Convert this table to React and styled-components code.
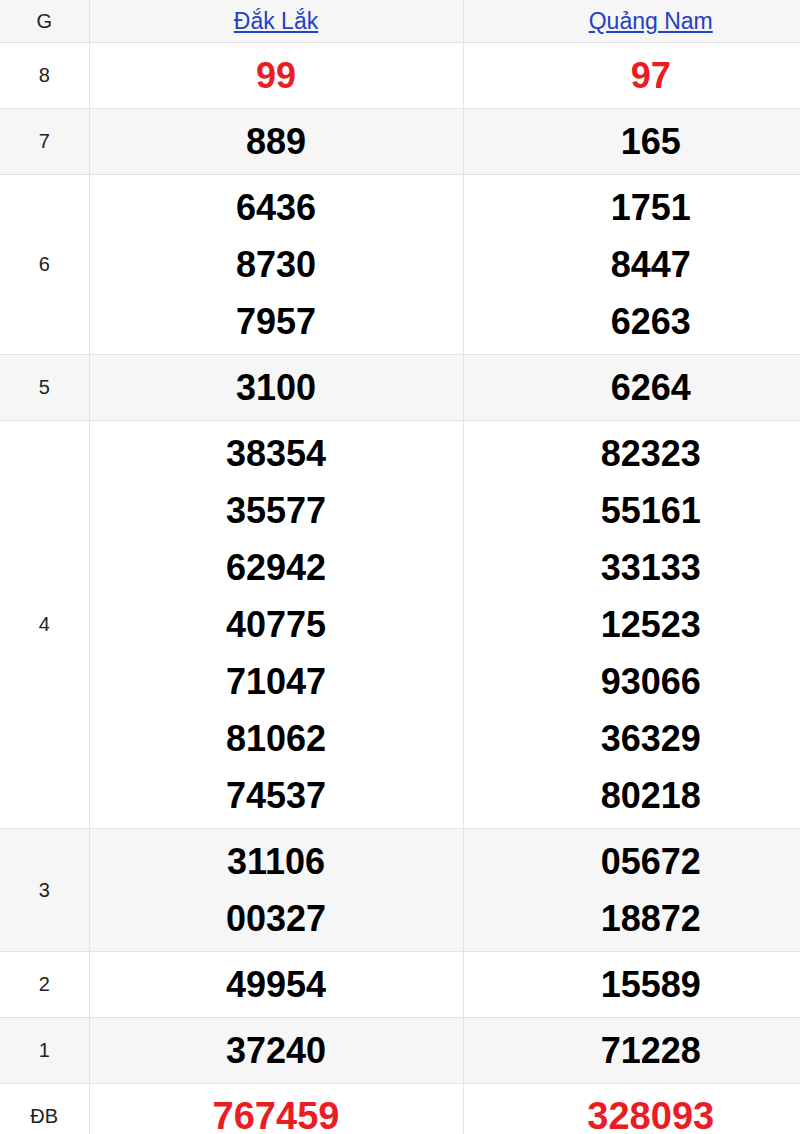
import React from 'react';
import styled, { createGlobalStyle } from 'styled-components';

const GlobalStyle = createGlobalStyle`
    body {
        margin: 0;
        background: #fff;
        overflow-x: hidden;
        font-family: "Liberation Sans", Arial, sans-serif;
    }
`;

const provinces = ['Đắk Lắk', 'Quảng Nam'];

const prizes = [
    { label: '8', red: true, values: [['99'], ['97']] },
    { label: '7', values: [['889'], ['165']] },
    { label: '6', values: [['6436', '8730', '7957'], ['1751', '8447', '6263']] },
    { label: '5', values: [['3100'], ['6264']] },
    {
        label: '4',
        values: [
            ['38354', '35577', '62942', '40775', '71047', '81062', '74537'],
            ['82323', '55161', '33133', '12523', '93066', '36329', '80218'],
        ],
    },
    { label: '3', values: [['31106', '00327'], ['05672', '18872']] },
    { label: '2', values: [['49954'], ['15589']] },
    { label: '1', values: [['37240'], ['71228']] },
    { label: 'ĐB', red: true, big: true, values: [['767459'], ['328093']] },
];

// the table is wider than the window, its right edge is cut off
const Table = styled.table`
    width: 838px;
    border-collapse: collapse;
    table-layout: fixed;
`;

const Row = styled.tr`
    background: ${p => (p.$shaded ? '#f6f6f7' : '#fff')};
`;

const HeadCell = styled.th`
    height: 42px;
    padding: 0;
    font-weight: normal;
    text-align: center;
    vertical-align: middle;
    border-right: 1px solid #e2e2e8;
    border-bottom: 1px solid #e2e2e8;
    &:last-child {
        border-right: none;
    }
`;

const GCell = styled.td`
    padding: 0;
    text-align: center;
    vertical-align: middle;
    font-size: 20px;
    color: #222;
    border-right: 1px solid #e2e2e8;
    border-bottom: 1px solid #e2e2e8;
`;

const NumCell = styled.td`
    padding: 4px 0;
    text-align: center;
    vertical-align: middle;
    border-right: 1px solid #e2e2e8;
    border-bottom: 1px solid #e2e2e8;
    &:last-child {
        border-right: none;
    }
`;

const Label = styled.span`
    font-size: 20px;
    color: #222;
`;

const Link = styled.a`
    font-size: 23px;
    color: #2440c4;
    text-decoration: underline;
`;

const Num = styled.div`
    font-size: ${p => (p.$big ? '38px' : '36px')};
    line-height: 57px;
    font-weight: bold;
    color: ${p => (p.$red ? '#ec1c24' : '#000')};
`;

export default function App() {
    return (
        <>
            <GlobalStyle />
            <Table>
                <colgroup>
                    <col style={{ width: 89 }} />
                    <col style={{ width: 374 }} />
                    <col style={{ width: 375 }} />
                </colgroup>
                <thead>
                    <Row $shaded>
                        <HeadCell><Label>G</Label></HeadCell>
                        {provinces.map(name => (
                            <HeadCell key={name}><Link href="#">{name}</Link></HeadCell>
                        ))}
                    </Row>
                </thead>
                <tbody>
                    {prizes.map((prize, i) => (
                        <Row key={prize.label} $shaded={i % 2 === 1}>
                            <GCell>{prize.label}</GCell>
                            {prize.values.map((list, j) => (
                                <NumCell key={j}>
                                    {list.map((n, k) => (
                                        <Num key={k} $red={prize.red} $big={prize.big}>{n}</Num>
                                    ))}
                                </NumCell>
                            ))}
                        </Row>
                    ))}
                </tbody>
            </Table>
        </>
    );
}
